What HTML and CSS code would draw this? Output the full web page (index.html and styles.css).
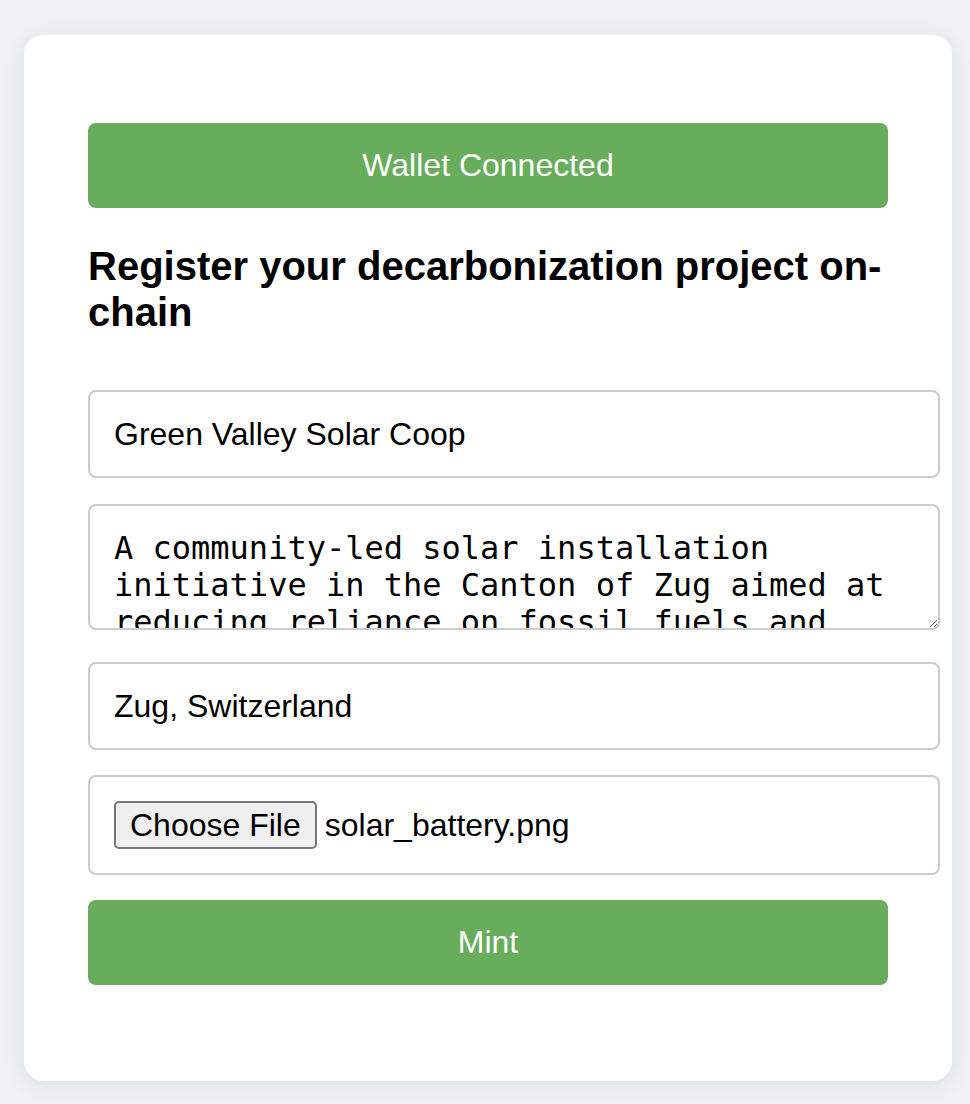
FILE: index.html
```html
<!DOCTYPE html>
<html lang="en">
<head>
<meta charset="utf-8">
<title>Register project</title>
<link rel="stylesheet" href="styles.css">
</head>
<body>
<main class="card">
  <button class="btn" type="button">Wallet Connected</button>
  <h2 class="title">Register your decarbonization project on-chain</h2>
  <form class="form">
    <input class="field" type="text" value="Green Valley Solar Coop">
    <textarea class="field area" rows="2" spellcheck="false">A community-led solar installation initiative in the Canton of Zug aimed at reducing reliance on fossil fuels and promoting local renewable energy production.</textarea>
    <input class="field" type="text" value="Zug, Switzerland">
    <div class="field file">
      <span class="file-btn">Choose File</span>
      <span class="file-name">solar_battery.png</span>
    </div>
    <button class="btn" type="button">Mint</button>
  </form>
</main>
</body>
</html>
```
FILE: styles.css
```css
html, body {
  margin: 0;
  background: #eef2f7;
}
body {
  padding: 35px 18px 24px 24px;
  font-family: "Liberation Sans", Arial, Helvetica, sans-serif;
  color: #000;
}
.card {
  width: 928px;
  box-sizing: border-box;
  background: #fff;
  border-radius: 20px;
  box-shadow: 0 4px 22px rgba(30, 45, 70, 0.09);
  padding: 88px 64px 96px;
}
.btn {
  display: block;
  width: 100%;
  box-sizing: border-box;
  border: none;
  border-radius: 8px;
  background: #68ad5c;
  color: #fff;
  font-family: "Liberation Sans", Arial, Helvetica, sans-serif;
  font-size: 32px;
  line-height: 37px;
  padding: 24px;
  cursor: pointer;
}
.title {
  margin: 35px 0 55px;
  font-size: 40px;
  line-height: 46px;
  font-weight: bold;
}
.form {
  display: flex;
  flex-direction: column;
  gap: 25px;
  margin: 0;
}
.field {
  display: block;
  width: 800px;
  margin: 0;
  padding: 24px;
  border: 2px solid #cccccc;
  border-radius: 8px;
  background: #fff;
  font-family: "Liberation Sans", Arial, Helvetica, sans-serif;
  font-size: 32px;
  line-height: 36px;
  color: #000;
  outline: none;
}
.area {
  font-family: "DejaVu Sans Mono", monospace;
  line-height: 37px;
  height: 74px;
  margin: 1px 0 7px;
  resize: both;
  overflow: hidden;
}
.file {
  display: flex;
  align-items: center;
  height: 48px;
}
.file-btn {
  display: inline-block;
  box-sizing: border-box;
  height: 48px;
  padding: 3px 14px;
  border: 2px solid #767676;
  border-radius: 5px;
  background: #efefef;
  font-size: 32px;
  line-height: 38px;
  margin-right: 8px;
}
.file-name {
  font-size: 32px;
  line-height: 38px;
}
```
